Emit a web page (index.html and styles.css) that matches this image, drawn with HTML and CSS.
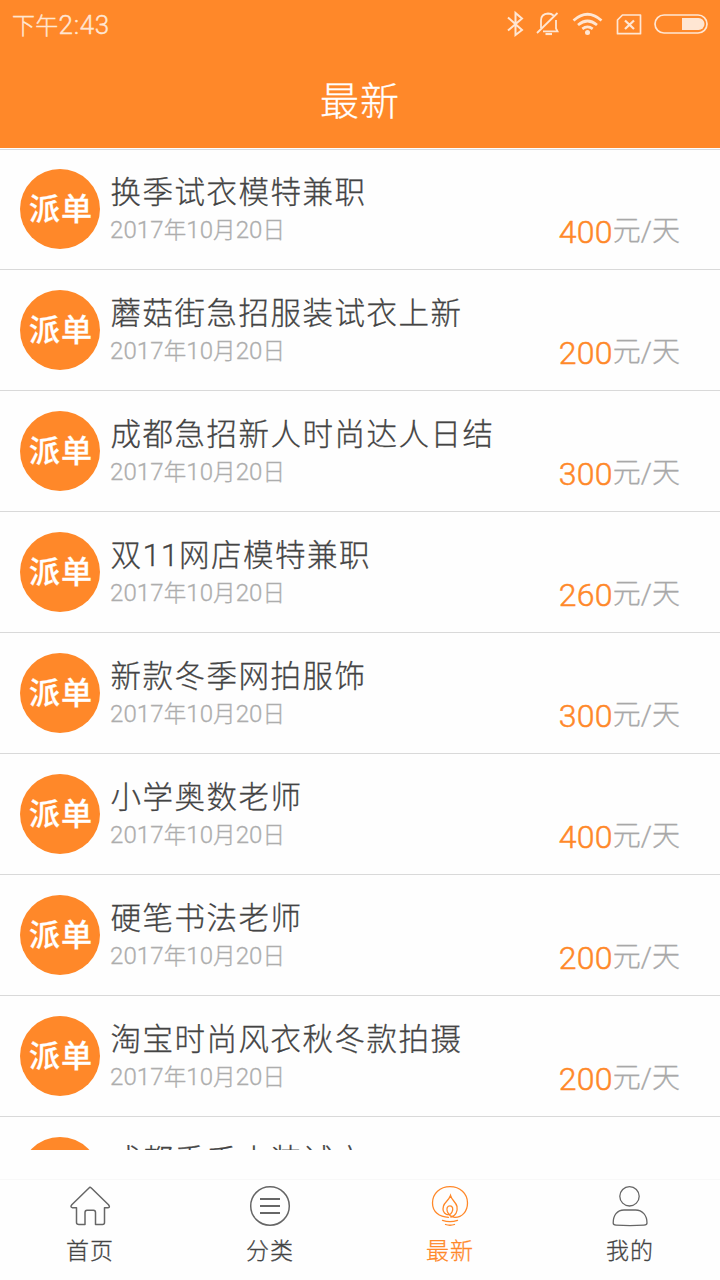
FILE: index.html
```html
<!DOCTYPE html>
<html lang="zh-CN">
<head>
<meta charset="utf-8">
<title>最新</title>
<link rel="stylesheet" href="styles.css">
</head>
<body>
<div class="app">
  <header class="header">
    <div class="status">
      <span class="clock"><span class="ampm">下午</span>2:43</span>
      <svg class="status-icons" width="206" height="32" viewBox="504 8 206 32" fill="none" stroke="#ffe6d3" stroke-width="2">
        <path d="M508 17.500L522 30L515.500 35V13L522 18.500L508 30.500"/>
        <path d="M541 28V20.500Q541 14 548 13.500Q551.500 13.500 553.500 15.500M556 20V28.500L557.500 31.300H543M537 33L557.500 13" stroke-width="1.800"/>
        <path d="M545.500 34H552" stroke-width="2.200"/>
        <path d="M573.500 20.500Q587.500 8 601.500 20.500M578 25Q587.500 17 597 25M582.300 28.800Q587.500 25 592.700 28.800" stroke-width="2.700"/>
        <circle cx="587.500" cy="32.500" r="2.500" fill="#ffe6d3" stroke="none"/>
        <path d="M622.500 15H640.500V33.700H617.500V20Z" stroke-width="1.700" stroke-linejoin="round"/>
        <path d="M625 20.500L634 29M634 20.500L625 29" stroke-width="2.300"/>
        <rect x="655" y="15" width="52" height="18" rx="9" stroke-width="1.700"/>
        <path d="M682 18H698.500A6 6 0 0 1 698.500 30H682Z" fill="#ffe6d3" stroke="none"/>
      </svg>
    </div>
    <h1 class="page-title">最新</h1>
  </header>

  <main class="list">
    <article class="job">
      <div class="avatar">派单</div>
      <div class="info"><h2 class="name">换季试衣模特兼职</h2><p class="date">2017<i>年</i>10<i>月</i>20<i>日</i></p></div>
      <p class="pay"><b>400</b><span>元/天</span></p>
    </article>
    <article class="job">
      <div class="avatar">派单</div>
      <div class="info"><h2 class="name">蘑菇街急招服装试衣上新</h2><p class="date">2017<i>年</i>10<i>月</i>20<i>日</i></p></div>
      <p class="pay"><b>200</b><span>元/天</span></p>
    </article>
    <article class="job">
      <div class="avatar">派单</div>
      <div class="info"><h2 class="name">成都急招新人时尚达人日结</h2><p class="date">2017<i>年</i>10<i>月</i>20<i>日</i></p></div>
      <p class="pay"><b>300</b><span>元/天</span></p>
    </article>
    <article class="job">
      <div class="avatar">派单</div>
      <div class="info"><h2 class="name">双<span class="num">11</span>网店模特兼职</h2><p class="date">2017<i>年</i>10<i>月</i>20<i>日</i></p></div>
      <p class="pay"><b>260</b><span>元/天</span></p>
    </article>
    <article class="job">
      <div class="avatar">派单</div>
      <div class="info"><h2 class="name">新款冬季网拍服饰</h2><p class="date">2017<i>年</i>10<i>月</i>20<i>日</i></p></div>
      <p class="pay"><b>300</b><span>元/天</span></p>
    </article>
    <article class="job">
      <div class="avatar">派单</div>
      <div class="info"><h2 class="name">小学奥数老师</h2><p class="date">2017<i>年</i>10<i>月</i>20<i>日</i></p></div>
      <p class="pay"><b>400</b><span>元/天</span></p>
    </article>
    <article class="job">
      <div class="avatar">派单</div>
      <div class="info"><h2 class="name">硬笔书法老师</h2><p class="date">2017<i>年</i>10<i>月</i>20<i>日</i></p></div>
      <p class="pay"><b>200</b><span>元/天</span></p>
    </article>
    <article class="job">
      <div class="avatar">派单</div>
      <div class="info"><h2 class="name">淘宝时尚风衣秋冬款拍摄</h2><p class="date">2017<i>年</i>10<i>月</i>20<i>日</i></p></div>
      <p class="pay"><b>200</b><span>元/天</span></p>
    </article>
    <article class="job">
      <div class="avatar"></div>
      <div class="info"><h2 class="name">成都秀禾小装试衣</h2></div>
    </article>
  </main>

  <nav class="tabs">
    <a class="tab">
      <svg width="44" height="44" viewBox="0 0 44 44" fill="none" stroke="currentColor" stroke-width="1.500" stroke-linejoin="round">
        <path d="M22 3.300Q22.700 3.300 23.300 4L40.500 20.700Q42.500 23.500 40 23.700H36.500V38.500Q36.500 40.500 34.500 40.500H27.500V28.500Q27.500 26.200 25.500 26.200H19Q17 26.200 17 28.500V40.500H11Q8.500 40.500 8.500 38.500V23.700H4.500Q1.800 23.200 3.800 20.700L21 4Q21.500 3.300 22 3.300Z"/>
      </svg>
      <span>首页</span>
    </a>
    <a class="tab">
      <svg width="44" height="44" viewBox="0 0 44 44" fill="none" stroke="currentColor" stroke-width="1.500">
        <circle cx="22" cy="22" r="19.300"/>
        <path d="M12 15H32M12 22H32M12 29H32" stroke-width="1.800"/>
      </svg>
      <span>分类</span>
    </a>
    <a class="tab active">
      <svg width="44" height="44" viewBox="0 0 44 44" fill="none" stroke="currentColor" stroke-width="1.300" stroke-linecap="round">
        <path d="M20.500 33.300C11 33.300 4.500 27.500 4.500 19C4.500 9.500 12 2.700 22 2.700C32 2.700 39.500 9.500 39.500 19C39.500 27.500 34 33.300 27 33.300C23 33.300 20.500 30.500 19.300 27.500C18.300 24.500 19.300 21.800 22 21.800C24.700 21.800 25.500 25 24 28C23 30.300 20.500 31 18.500 30.300C15.500 29 14.500 25.500 15.500 22C16.700 18 20.500 17 22.500 11.500C23.500 16 28 18 29 22.500C29.800 27 28 32 23 33"/>
        <path d="M14.500 36.300Q22 38.800 29.500 36.300M17.500 40.500Q22 42 26.500 40.500"/>
      </svg>
      <span>最新</span>
    </a>
    <a class="tab">
      <svg width="44" height="44" viewBox="0 0 44 44" fill="none" stroke="currentColor" stroke-width="1.300">
        <circle cx="21.500" cy="12.300" r="9.700"/>
        <path d="M16 26H27.500C34.500 26 39 31.500 39 39C39 40.500 38 41.100 36 41.100C27 41.700 17 41.700 8 41.100C6 41 5.200 40.500 5.200 39C5.200 31.500 9 26 16 26Z"/>
      </svg>
      <span>我的</span>
    </a>
  </nav>
</div>
</body>
</html>
```

FILE: styles.css
```css
* { box-sizing: border-box; margin: 0; padding: 0; }

body {
  background: #fefefe;
  color: #444;
  font-family: Roboto, "Noto Sans CJK SC", sans-serif;
  font-weight: 300;
  -webkit-text-stroke: .28px currentColor;
}

.app {
  display: flex;
  flex-direction: column;
  width: 720px;
  height: 1280px;
  overflow: hidden;
}

.header {
  flex: none;
  height: 149px;
  background: #ff8829;
  border-bottom: 1px solid #fff;
}

.status {
  display: flex;
  align-items: center;
  justify-content: space-between;
  height: 48px;
  padding: 4px 10px 0 12px;
}

.clock {
  color: #ffe6d3;
  font-size: 26px;
  line-height: 32px;
  letter-spacing: .6px;
  -webkit-text-stroke-width: .4px;
}

.ampm { font-size: 23px; letter-spacing: .3px; }

.status-icons { margin-top: -4px; }

.page-title {
  color: #fff;
  font-size: 39px;
  font-weight: 300;
  line-height: 60px;
  padding-top: 24px;
  letter-spacing: 1px;
  text-align: center;
}

.list {
  flex: none;
  height: 1001px;
  overflow: hidden;
  box-shadow: inset 0 1px #d9dbdd;
}

.job {
  display: flex;
  height: 121px;
  padding: 20px 40px 20px 20px;
  border-bottom: 1px solid #d9d9d9;
}

.avatar {
  flex: none;
  width: 80px;
  height: 80px;
  border-radius: 50%;
  background: #ff8829;
  color: #fff;
  font-size: 31px;
  font-weight: 500;
  line-height: 81px;
  letter-spacing: 1px;
  padding-left: 9px;
  white-space: nowrap;
  -webkit-text-stroke-width: .3px;
}

.info { flex: 1; padding: 2px 0 0 10px; }

.name {
  font-size: 30.5px;
  font-weight: 300;
  line-height: 44px;
  letter-spacing: 1.5px;
  padding-left: .5px;
  white-space: nowrap;
}

.num { font-size: 32px; letter-spacing: .5px; line-height: 1; }

.date {
  color: #adadad;
  font-size: 24px;
  line-height: 32px;
  letter-spacing: .1px;
  margin-top: -1px;
  -webkit-text-stroke-width: .3px;
}

.date i { font-size: 22.500px; font-style: normal; }

.pay {
  display: flex;
  align-self: flex-end;
  color: #a8a8a8;
  font-size: 28px;
  line-height: 36px;
  margin-bottom: -1px;
  white-space: nowrap;
}

.pay b {
  color: #ff8829;
  font-size: 32px;
  font-weight: 300;
  letter-spacing: .3px;
  -webkit-text-stroke-width: .5px;
}

.tabs {
  display: flex;
  flex: none;
  height: 101px;
  margin-top: 29px;
  border-top: 1px solid #f8f8f8;
}

.tab {
  display: flex;
  flex: 1;
  flex-direction: column;
  align-items: center;
  padding-top: 4px;
  color: #666;
}

.tab span {
  color: #444;
  font-size: 23px;
  line-height: 34px;
  margin-top: 7px;
  letter-spacing: 1px;
}

.tab.active, .active span { color: #ff8829; }
```
